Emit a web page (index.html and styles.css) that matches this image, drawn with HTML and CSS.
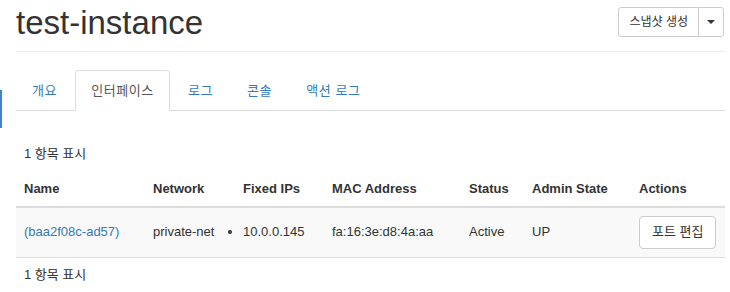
FILE: index.html
```html
<!DOCTYPE html>
<html lang="ko">
<head>
<meta charset="utf-8">
<title>test-instance</title>
<link rel="stylesheet" href="styles.css">
</head>
<body>
<div class="page">
  <aside class="rail"><span class="rail-mark"></span></aside>
  <main class="content">
    <header class="page-header">
      <h1 class="title">test-instance</h1>
      <div class="btn-group">
        <button class="btn btn-sm">스냅샷 생성</button>
        <button class="btn btn-sm btn-toggle"><span class="caret"></span></button>
      </div>
    </header>
    <ul class="tabs">
      <li class="tab"><a class="tab-link">개요</a></li>
      <li class="tab active"><a class="tab-link">인터페이스</a></li>
      <li class="tab"><a class="tab-link">로그</a></li>
      <li class="tab"><a class="tab-link">콘솔</a></li>
      <li class="tab"><a class="tab-link">액션 로그</a></li>
    </ul>
    <table class="table">
      <colgroup>
        <col class="c-name"><col class="c-net"><col class="c-ip"><col class="c-mac"><col class="c-status"><col class="c-admin"><col class="c-actions">
      </colgroup>
      <thead>
        <tr class="count-row"><td colspan="7">1 항목 표시</td></tr>
        <tr class="head-row">
          <th>Name</th><th>Network</th><th>Fixed IPs</th><th>MAC Address</th><th>Status</th><th>Admin State</th><th>Actions</th>
        </tr>
      </thead>
      <tbody>
        <tr class="data-row">
          <td><a class="link">(baa2f08c-ad57)</a></td>
          <td>private-net</td>
          <td><ul class="ip-list"><li>10.0.0.145</li></ul></td>
          <td>fa:16:3e:d8:4a:aa</td>
          <td>Active</td>
          <td>UP</td>
          <td><button class="btn">포트 편집</button></td>
        </tr>
      </tbody>
      <tfoot>
        <tr class="count-row foot"><td colspan="7">1 항목 표시</td></tr>
      </tfoot>
    </table>
  </main>
</div>
</body>
</html>
```
FILE: styles.css
```css
* { box-sizing: border-box; }
html, body { margin: 0; padding: 0; background: #fff; }
body {
  font-family: "Liberation Sans", "Noto Sans CJK KR", sans-serif;
  font-size: 13px;
  line-height: 1.42857;
  color: #333;
}
.page {
  display: flex;
  width: 730px;
  height: 292px;
  overflow: hidden;
}
.rail {
  width: 16px;
  flex: none;
  display: flex;
  flex-direction: column;
}
.rail-mark {
  display: block;
  width: 2px;
  height: 38px;
  margin-top: 90px;
  background: #3a87c8;
}
.content {
  width: 709px;
  flex: none;
}
.page-header {
  display: flex;
  justify-content: space-between;
  align-items: flex-start;
  padding: 5px 0 10px;
  border-bottom: 1px solid #eee;
}
.title {
  margin: 0;
  font-size: 33px;
  font-weight: 400;
  line-height: 1.1;
  color: #333;
}
.btn-group {
  display: flex;
  margin-top: 2px;
  margin-right: 1px;
}
.btn {
  font-family: inherit;
  font-size: 13px;
  line-height: 1.42857;
  color: #333;
  background: #fff;
  border: 1px solid #ccc;
  border-radius: 4px;
  padding: 6px 12px;
  cursor: pointer;
  margin: 0;
}
.btn-sm {
  font-size: 12px;
  line-height: 1.5;
  padding: 5px 10px;
  border-radius: 3px;
}
.btn-group .btn-sm:first-child {
  border-top-right-radius: 0;
  border-bottom-right-radius: 0;
}
.btn-toggle {
  margin-left: -1px;
  padding-left: 8px;
  padding-right: 8px;
  border-top-left-radius: 0;
  border-bottom-left-radius: 0;
  display: flex;
  align-items: center;
}
.caret {
  display: block;
  width: 0;
  height: 0;
  border-top: 4px solid #333;
  border-left: 4px solid transparent;
  border-right: 4px solid transparent;
}
.tabs {
  list-style: none;
  margin: 18px 0 0;
  padding: 0;
  display: flex;
  border-bottom: 1px solid #ddd;
}
.tab {
  margin-right: 2px;
  margin-bottom: -1px;
}
.tab-link {
  display: block;
  padding: 10px 15px;
  line-height: 19px;
  letter-spacing: 0.6px;
  border: 1px solid transparent;
  border-radius: 4px 4px 0 0;
  color: #337ab7;
  cursor: pointer;
}
.tab.active .tab-link {
  color: #555;
  background: #fff;
  border-color: #ddd #ddd transparent;
}
.table {
  width: 709px;
  table-layout: fixed;
  border-collapse: collapse;
  border-spacing: 0;
  margin-top: 26px;
}
.c-name { width: 129px; }
.c-net { width: 90px; }
.c-ip { width: 89px; }
.c-mac { width: 137px; }
.c-status { width: 63px; }
.c-admin { width: 107px; }
.c-actions { width: 94px; }
.table td, .table th {
  padding: 8px;
  text-align: left;
  vertical-align: middle;
  white-space: nowrap;
}
.head-row th {
  font-weight: 700;
  vertical-align: bottom;
  border-bottom: 2px solid #ddd;
}
.data-row td {
  background: #f9f9f9;
  border-top: 1px solid #ddd;
}
.foot td {
  border-top: 1px solid #ddd;
}
.link { color: #337ab7; cursor: pointer; }
.ip-list {
  margin: 0;
  padding: 0;
  list-style: disc outside;
}
```
